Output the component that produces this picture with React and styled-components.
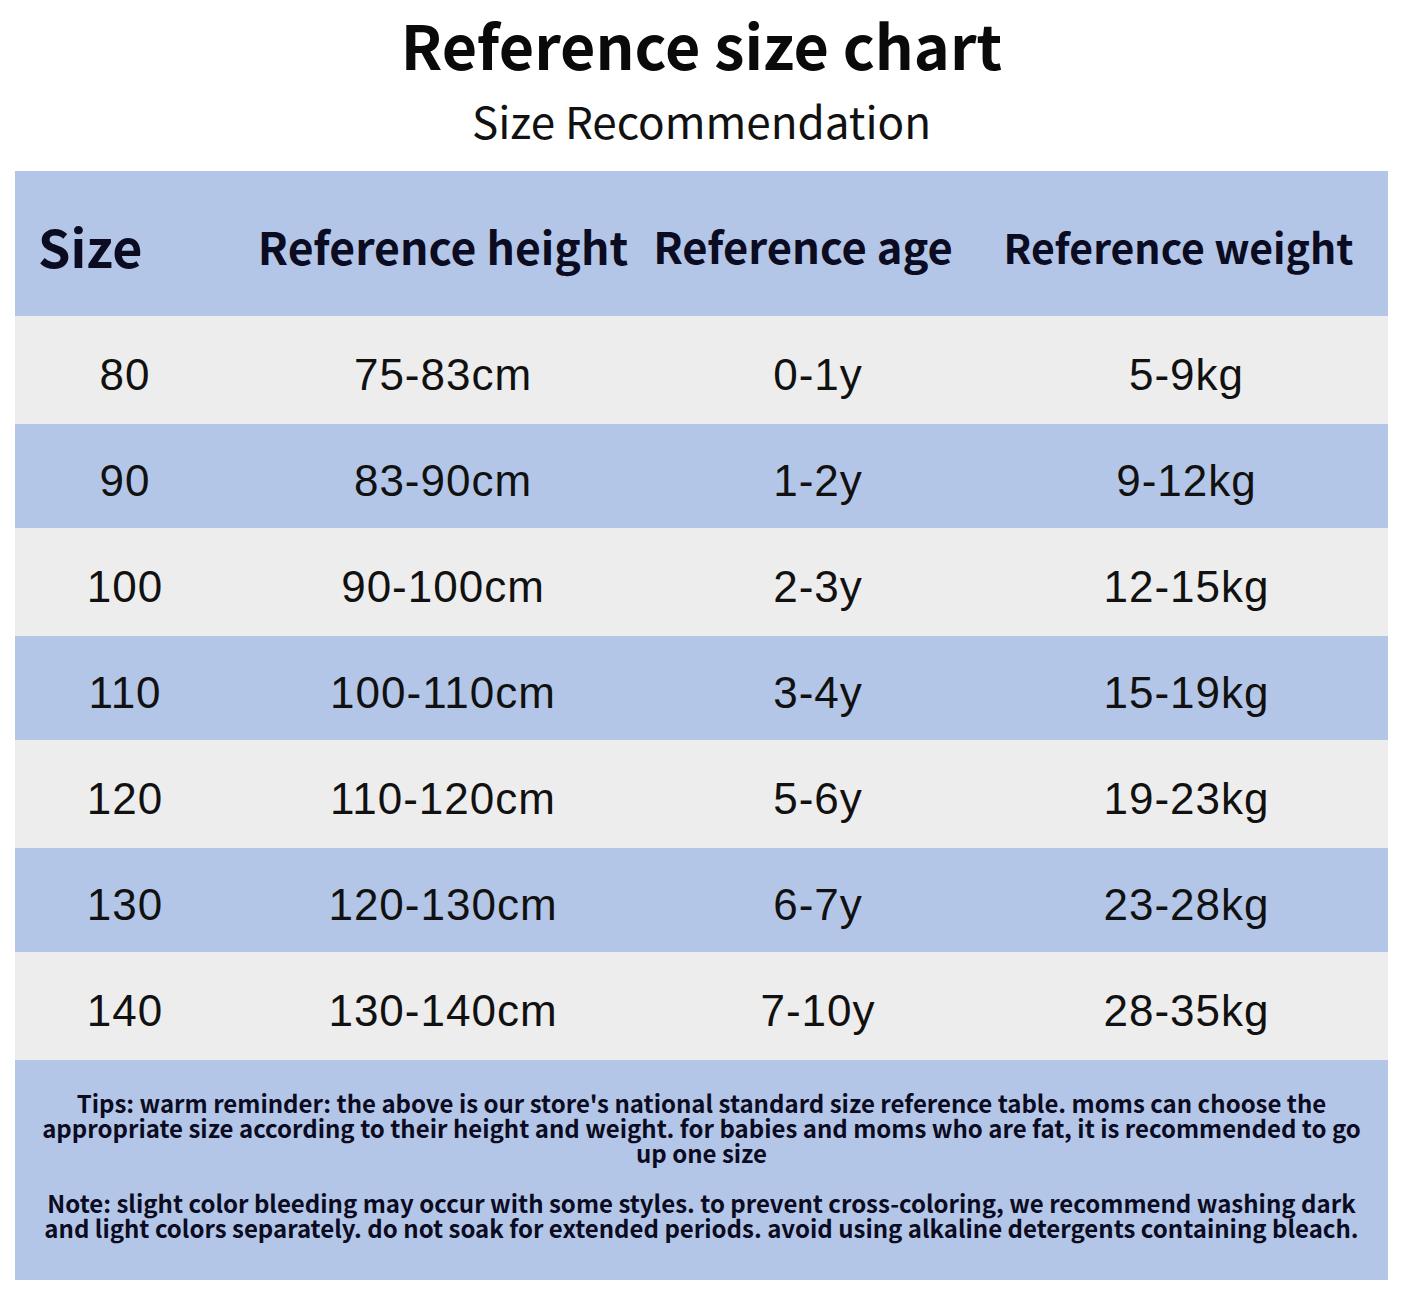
import React from 'react';
import styled, { createGlobalStyle } from 'styled-components';

const GlobalStyle = createGlobalStyle`
    html, body {
        margin: 0;
        padding: 0;
        background: #ffffff;
    }
    body {
        font-family: "Noto Sans CJK SC", "Noto Sans", sans-serif;
        color: #0b0b22;
    }
`

const Page = styled.div`
    width: 1404px;
    height: 1295px;
    padding: 0 16px 0 15px;
    box-sizing: border-box;
    display: flex;
    flex-direction: column;
`

const Heading = styled.header`
    height: 171px;
    display: flex;
    flex-direction: column;
    align-items: center;
`

const Title = styled.h1`
    margin: 8px 0 0;
    font-size: 61px;
    font-weight: 700;
    line-height: 72px;
    color: #0a0a0a;
`

const Subtitle = styled.h2`
    margin: 12px 0 0;
    font-size: 44px;
    font-weight: 400;
    line-height: 56px;
    color: #111;
`

const Table = styled.div`
    display: flex;
    flex-direction: column;
`

const Row = styled.div`
    display: grid;
    grid-template-columns: 220px 416px 334px 1fr;
    align-items: center;
    height: ${p => p.$height}px;
    background: ${p => (p.$blue ? '#b4c6e7' : '#ededed')};
`

const HeadCell = styled.div`
    font-size: ${p => p.$size}px;
    font-weight: 700;
    color: #0b0b22;
    text-align: ${p => (p.$left ? 'left' : 'center')};
    padding-left: ${p => (p.$left ? 23 : 0)}px;
    padding-right: ${p => p.$shift || 0}px;
    padding-top: 4px;
    white-space: nowrap;
`

const Cell = styled.div`
    font-family: "Liberation Sans", Arial, sans-serif;
    font-size: 44px;
    letter-spacing: 1px;
    color: #111;
    text-align: center;
    padding-top: 10px;
`

const Footer = styled.div`
    height: 220px;
    background: #b4c6e7;
    padding: 30px 20px 0;
    box-sizing: border-box;
    text-align: center;
`

const Note = styled.p`
    margin: 0 0 25px;
    font-size: 24px;
    font-weight: 700;
    line-height: 25px;
    color: #0b0b22;
`

const rows = [
    ['80', '75-83cm', '0-1y', '5-9kg'],
    ['90', '83-90cm', '1-2y', '9-12kg'],
    ['100', '90-100cm', '2-3y', '12-15kg'],
    ['110', '100-110cm', '3-4y', '15-19kg'],
    ['120', '110-120cm', '5-6y', '19-23kg'],
    ['130', '120-130cm', '6-7y', '23-28kg'],
    ['140', '130-140cm', '7-10y', '28-35kg'],
];

const App = () => {
    return (
        <>
            <GlobalStyle />
            <Page>
                <Heading>
                    <Title>Reference size chart</Title>
                    <Subtitle>Size Recommendation</Subtitle>
                </Heading>
                <Table>
                    <Row $blue $height={145}>
                        <HeadCell $left $size={52}>Size</HeadCell>
                        <HeadCell $size={44.5}>Reference height</HeadCell>
                        <HeadCell $size={43.5} $shift={30}>Reference age</HeadCell>
                        <HeadCell $size={41} $shift={16}>Reference weight</HeadCell>
                    </Row>
                    {rows.map((r, i) => (
                        <Row key={r[0]} $blue={i % 2 === 1} $height={i % 2 === 0 ? 108 : 104}>
                            {r.map((v, j) => <Cell key={j}>{v}</Cell>)}
                        </Row>
                    ))}
                    <Footer>
                        <Note>
                            Tips: warm reminder: the above is our store's national standard size reference table. moms can choose the appropriate size according to their height and weight. for babies and moms who are fat, it is recommended to go up one size
                        </Note>
                        <Note>
                            Note: slight color bleeding may occur with some styles. to prevent cross-coloring, we recommend washing dark and light colors separately. do not soak for extended periods. avoid using alkaline detergents containing bleach.
                        </Note>
                    </Footer>
                </Table>
            </Page>
        </>
    )
}

export default App;
